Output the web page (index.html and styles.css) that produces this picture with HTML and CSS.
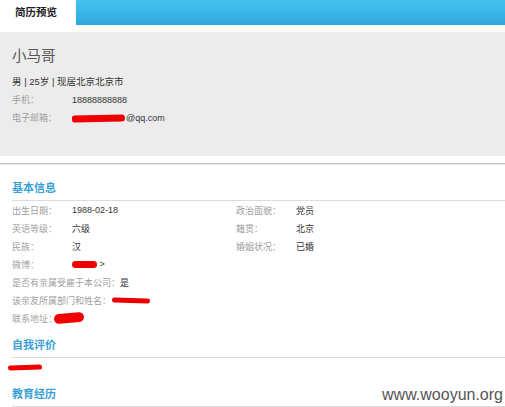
FILE: index.html
```html
<!DOCTYPE html>
<html lang="zh-CN">
<head>
<meta charset="utf-8">
<title>简历预览</title>
<link rel="stylesheet" href="styles.css">
</head>
<body>
<div class="page">
  <div class="tabs">
    <div class="tab-active">简历预览</div>
    <div class="tab-fill"></div>
  </div>

  <div class="profile">
    <div class="name">小马哥</div>
    <div class="summary">男 | 25岁 | 现居北京北京市</div>
    <div class="contact-row"><span class="label">手机：</span><span class="value">18888888888</span></div>
    <div class="contact-row"><span class="label">电子邮箱：</span><span class="value"><span class="redact redact-email"></span>@qq.com</span></div>
  </div>

  <div class="divider"></div>

  <div class="section">
    <div class="section-title">基本信息</div>
    <div class="info-grid">
      <span class="label">出生日期：</span><span class="value">1988-02-18</span>
      <span class="label">政治面貌：</span><span class="value">党员</span>
      <span class="label">英语等级：</span><span class="value">六级</span>
      <span class="label">籍贯：</span><span class="value">北京</span>
      <span class="label">民族：</span><span class="value">汉</span>
      <span class="label">婚姻状况：</span><span class="value">已婚</span>
      <span class="label">微博：</span><span class="value"><span class="redact redact-weibo"></span>&nbsp;&gt;</span>
    </div>
    <div class="full-row"><span class="label">是否有亲属受雇于本公司：</span><span class="value">是</span></div>
    <div class="full-row"><span class="label">该亲友所属部门和姓名：</span><span class="redact redact-relative"></span></div>
    <div class="full-row"><span class="label">联系地址：</span><span class="redact redact-address"></span></div>
  </div>

  <div class="section">
    <div class="section-title spaced">自我评价</div>
    <div class="eval-row"><span class="redact redact-eval"></span></div>
  </div>

  <div class="section">
    <div class="section-title spaced">教育经历</div>
  </div>

  <div class="watermark">www.wooyun.org</div>
</div>
</body>
</html>
```

FILE: styles.css
```css
* { box-sizing: border-box; }

html, body {
  margin: 0;
  padding: 0;
  background: #fff;
}

body {
  font-family: "Liberation Sans", "Noto Sans CJK SC", sans-serif;
  font-size: 9px;
  color: #333;
  overflow: hidden;
}

.page {
  position: relative;
  width: 505px;
  height: 407px;
}

.tabs {
  display: flex;
  height: 25px;
}

.tab-active {
  width: 76px;
  padding-left: 15px;
  line-height: 25px;
  font-size: 10.5px;
  font-weight: bold;
  color: #222;
  background: #fff;
}

.tab-fill {
  flex: 1;
  background: linear-gradient(#45c1ef, #2fa7dc);
}

.profile {
  margin-top: 7px;
  height: 124px;
  padding: 14px 0 0 12px;
  background: #ececec;
}

.name {
  font-size: 14.5px;
  line-height: 20px;
  color: #555;
  margin-bottom: 7px;
}

.summary {
  line-height: 18px;
  font-size: 9.5px;
  color: #333;
}

.contact-row {
  display: flex;
  align-items: center;
  line-height: 18px;
}

.label {
  color: #a0a0a0;
}

.contact-row .label,
.info-grid .label {
  width: 60px;
}

.value {
  color: #333;
  display: inline-flex;
  align-items: center;
}

.divider {
  margin-top: 7px;
  border-top: 1px solid #c6c6c6;
  box-shadow: 0 1px 0 #e8e8e8;
}

.section {
  padding-left: 12px;
}

.section-title {
  margin-top: 14px;
  line-height: 20px;
  padding-bottom: 2px;
  border-bottom: 1px solid #dcdcdc;
  font-size: 11px;
  font-weight: bold;
  color: #3a9fd6;
}

.section-title.spaced {
  margin-top: 8px;
}

.info-grid {
  display: grid;
  grid-template-columns: 60px 164px 60px 1fr;
  grid-auto-rows: 18px;
  align-items: center;
}

.full-row {
  display: flex;
  align-items: center;
  height: 18px;
}

.eval-row {
  height: 18px;
  display: flex;
  align-items: center;
  margin-left: -4px;
}

.redact {
  display: inline-block;
  background: #ee0000;
  border-radius: 4px;
}

.redact-email {
  width: 53px;
  height: 7px;
  margin-right: 1px;
  border-radius: 3px 4px 4px 3px;
  transform: rotate(-1deg);
}

.redact-weibo {
  width: 25px;
  height: 7px;
  border-radius: 5px;
}

.redact-relative {
  width: 38px;
  height: 5px;
  margin-left: 1px;
  border-radius: 4px;
  transform: rotate(2deg);
}

.redact-address {
  width: 30px;
  height: 10px;
  border-radius: 6px;
  margin-left: -3px;
  transform: rotate(-5deg);
}

.redact-eval {
  width: 34px;
  height: 5px;
  border-radius: 4px;
  transform: rotate(-2deg);
}

.watermark {
  position: absolute;
  right: 2px;
  top: 387px;
  font-family: "Liberation Sans", sans-serif;
  font-size: 16px;
  line-height: 16px;
  color: #555;
}
```
